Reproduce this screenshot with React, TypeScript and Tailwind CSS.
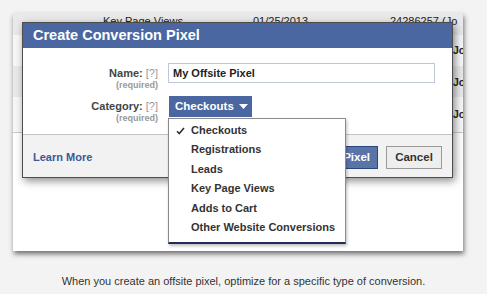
const ui = "font-['Liberation_Sans',Arial,sans-serif]";

const rows = [
  { h: 'h-[22px]', bg: 'bg-[#e9e9e9]', pt: 'pt-[1px]', full: true },
  { h: 'h-[31px]', bg: 'bg-[#f7f7f7]', pt: 'pt-[8px]', full: false },
  { h: 'h-[31px]', bg: 'bg-[#e9e9e9]', pt: 'pt-[9px]', full: false },
  { h: 'h-[35px]', bg: 'bg-[#f7f7f7]', pt: 'pt-[10px]', full: false },
];

function TableBehind() {
  return (
    <div className="flex flex-col">
      {rows.map((r, i) =>
        r.full ? (
          <div key={i} className={`${r.h} ${r.bg} ${r.pt} flex text-[11px] leading-[14px] text-[#222]`}>
            <span className="w-[90px]" />
            <span className="w-[150px]">Key Page Views</span>
            <span className="w-[137px]">01/25/2013</span>
            <span className="whitespace-nowrap">24286257 (Jo</span>
          </div>
        ) : (
          <div key={i} className={`${r.h} ${r.bg} ${r.pt} pl-[440px] text-[10.5px] leading-[14px] font-bold text-[#222] whitespace-nowrap`}>
            Jo
          </div>
        )
      )}
      <div className="h-px bg-[#c9c9c9]" />
    </div>
  );
}

function Field({ label, children }: { label: string; children: React.ReactNode }) {
  return (
    <div className="flex gap-[10px]">
      <div className="w-[135px] text-right">
        <div className="text-[11px] leading-[14px] mt-[3px]">
          <span className="font-bold text-[#444]">{label}</span>{' '}
          <span className="text-[#999]">[?]</span>
        </div>
        <div className="text-[9px] leading-[11px] font-bold text-[#999]">(required)</div>
      </div>
      {children}
    </div>
  );
}

function CheckMark() {
  return (
    <svg width="9" height="8" viewBox="0 0 9 8" className="absolute left-[7px] top-[6px]">
      <path d="M1 4.2 L3.3 6.6 L8 1" fill="none" stroke="#333" strokeWidth="1.6" />
    </svg>
  );
}

const items = ['Checkouts', 'Registrations', 'Leads', 'Key Page Views', 'Adds to Cart', 'Other Website Conversions'];

function Menu() {
  return (
    <div className="absolute left-[155px] top-[105px] w-[178px] h-[126px] bg-white border border-[#8a8a8a] border-b-2 border-b-[#1f2c5a] pt-[2px] shadow-[1px_2px_3px_rgba(0,0,0,0.25)]">
      {items.map((t, i) => (
        <div key={t} className="relative h-[19.4px] pl-[22px] text-[11px] leading-[19px] font-bold text-[#333]">
          {i === 0 && <CheckMark />}
          {t}
        </div>
      ))}
    </div>
  );
}

function Dialog() {
  return (
    <div className="absolute left-[9px] top-[9px] w-[431px] h-[156px] flex flex-col border border-[#4d4d4d] shadow-[2px_3px_8px_rgba(0,0,0,0.45)]">
      <div className="h-[25px] bg-[#4b67a1] pl-[10px] text-white font-bold text-[14.5px] leading-[25px]">
        Create Conversion Pixel
      </div>
      <div className="flex-1 bg-white pt-[15px] flex flex-col gap-[5px]">
        <Field label="Name:">
          <div className="w-[267px] h-[20px] border border-[#bdc7d8] pl-[4px] text-[11px] leading-[18px] font-bold text-[#222]">
            My Offsite Pixel
          </div>
        </Field>
        <Field label="Category:">
          <div className="w-[83px] h-[21px] ml-px bg-[#4b67a1] flex items-center pl-[6px] gap-[5px] text-white text-[11.5px] font-bold">
            Checkouts
            <svg width="9" height="5" viewBox="0 0 9 5">
              <path d="M0 0 H9 L4.5 5 Z" fill="#fff" />
            </svg>
          </div>
        </Field>
      </div>
      <div className="h-[43px] bg-[#f2f2f2] border-t border-[#c4c4c4] flex items-center pt-[3px] pl-[10px] pr-[10px]">
        <span className="text-[11px] font-bold text-[#3b5998]">Learn More</span>
        <div className="ml-auto flex gap-[8px]">
          <div className="h-[23px] px-[7px] bg-[#5b74a8] border border-[#29447e] text-white text-[11.5px] font-bold leading-[21px]">
            Create Pixel
          </div>
          <div className="h-[23px] w-[56px] bg-[#eeeeee] border border-[#999] text-[#333] text-[11.5px] font-bold leading-[21px] text-center">
            Cancel
          </div>
        </div>
      </div>
    </div>
  );
}

export default function App() {
  return (
    <div className={`w-[487px] h-[294px] bg-[#f3f3f3] pt-[13px] pl-[13px] ${ui}`}>
      <div className="relative w-[450px] h-[238px] bg-white overflow-hidden shadow-[1px_3px_5px_rgba(0,0,0,0.55)]">
        <TableBehind />
        <Dialog />
        <Menu />
      </div>
      <p className="mt-[23px] w-[461px] text-center text-[11px] leading-[14px] text-[#333]">
        When you create an offsite pixel, optimize for a specific type of conversion.
      </p>
    </div>
  );
}
